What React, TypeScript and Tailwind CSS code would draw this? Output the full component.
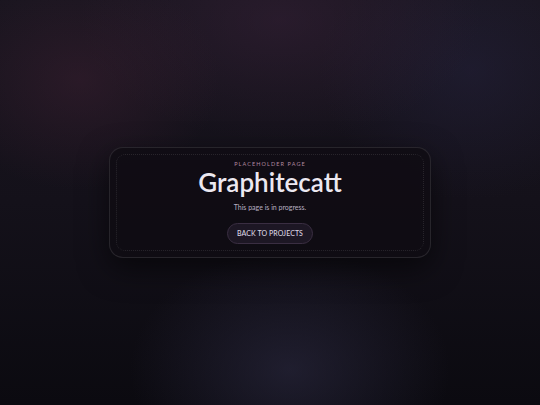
export default function App() {
  return (
    <div
      className="relative flex h-[405px] w-[540px] items-center justify-center overflow-hidden bg-[#110f17] bg-[radial-gradient(ellipse_140px_110px_at_80px_80px,rgba(70,35,55,0.4),transparent),radial-gradient(ellipse_200px_120px_at_280px_20px,rgba(60,35,60,0.45),transparent),radial-gradient(ellipse_150px_130px_at_470px_70px,rgba(40,38,70,0.4),transparent),radial-gradient(ellipse_160px_120px_at_290px_370px,rgba(50,48,75,0.5),transparent),linear-gradient(180deg,#19151f_0%,#14111a_50%,#0b0a10_100%)]"
      style={{ fontFamily: '"Trebuchet MS", Lato, "DejaVu Sans", sans-serif' }}
    >
      <div className="w-[322px] rounded-[14px] border border-white/10 bg-[#0f0c13]/85 p-[6px] shadow-[0_10px_30px_rgba(0,0,0,0.55)]">
        <div className="flex flex-col items-center rounded-[9px] border border-dotted border-white/10 pb-[6px] pt-[5px]">
          <div className="text-[5.5px] uppercase leading-[8px] tracking-[0.2em] text-[#b08aa0]">
            Placeholder Page
          </div>
          <h1 className="-mt-[1px] text-[26px] font-semibold leading-[30px] text-[#ece8f0]">Graphitecatt</h1>
          <p className="mt-[6px] text-[7px] leading-[9px] text-[#b8b0c2]">This page is in progress.</p>
          <button className="mt-[11px] h-[21px] rounded-full border border-[#3a2e42] bg-[#1d1724] px-[9px] text-[7px] font-medium uppercase tracking-[0.01em] text-[#dcd6e2]">
            Back to projects
          </button>
        </div>
      </div>
    </div>
  )
}
